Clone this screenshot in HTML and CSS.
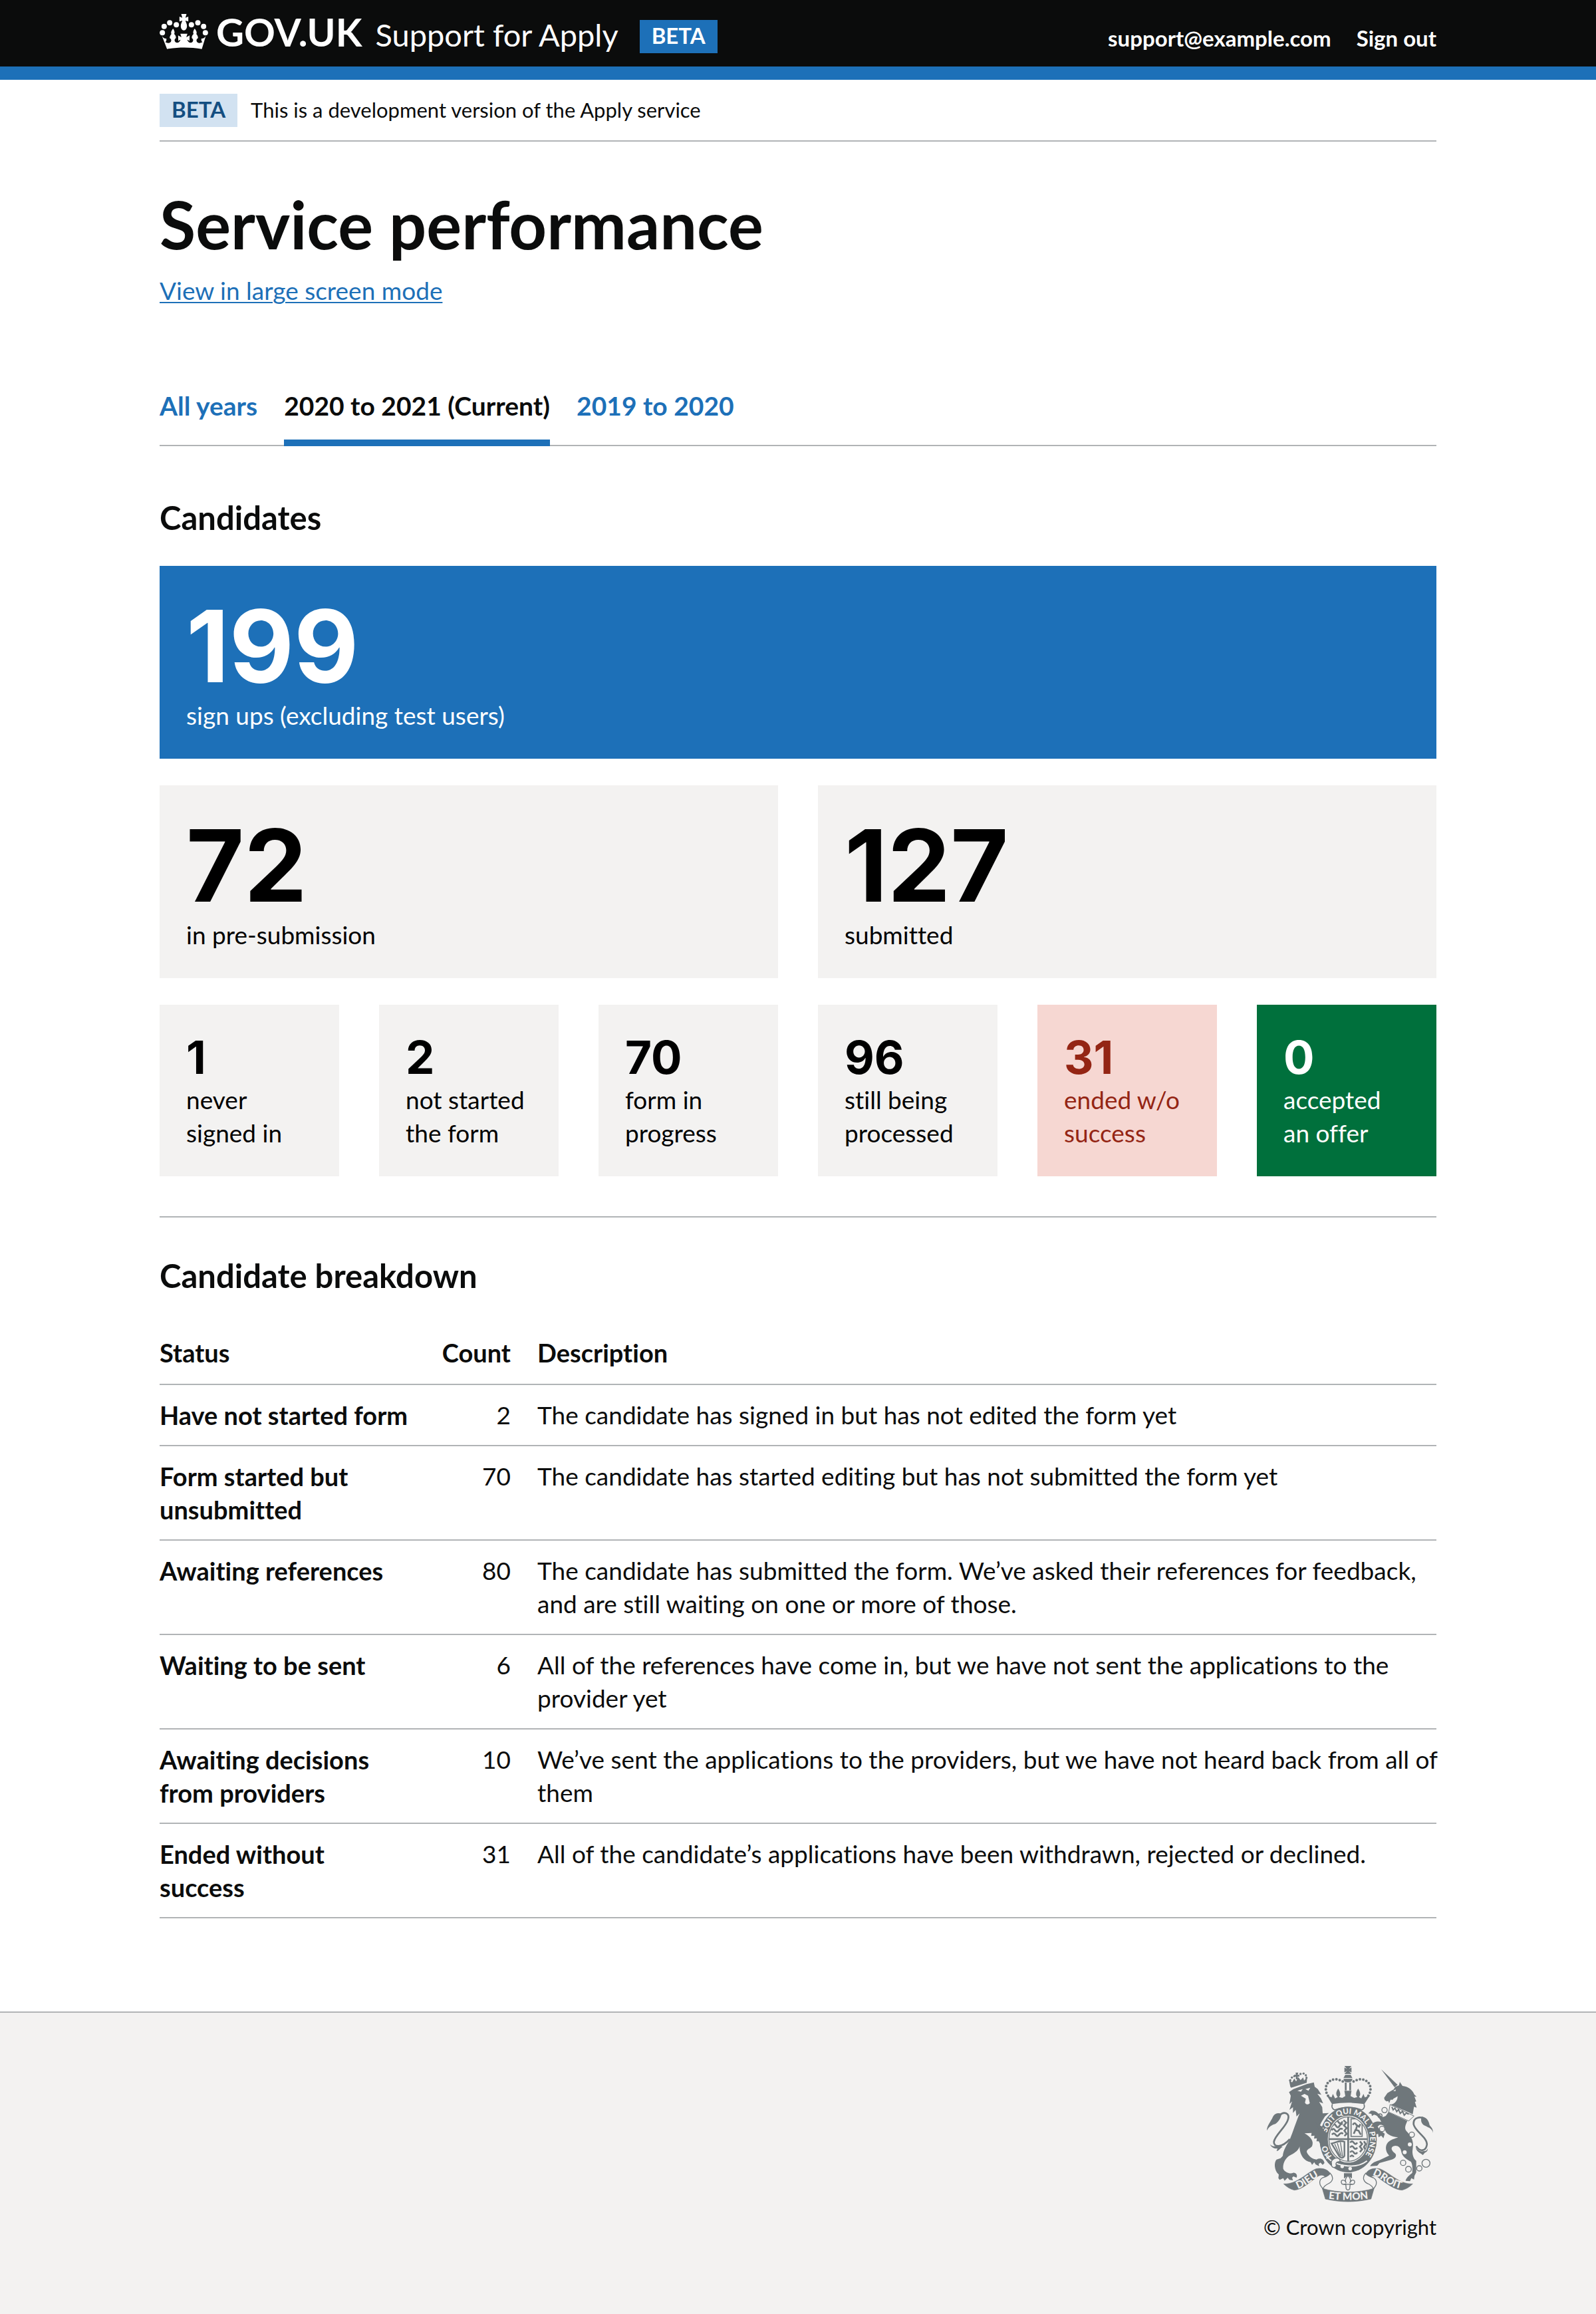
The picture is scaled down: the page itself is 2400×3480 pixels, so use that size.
FILE: index.html
```
<!DOCTYPE html>
<html lang="en">
<head>
  <meta charset="utf-8">
  <meta name="viewport" content="width=device-width, initial-scale=1">
  <title>Service performance - Support for Apply</title>
  <link rel="stylesheet" href="styles.css">
</head>
<body>
  <header class="header">
    <div class="container header-inner">
      <svg class="header-crown" viewBox="29 33 218 159" aria-hidden="true">
        <g fill="#fff">
          <circle cx="41" cy="118" r="12"/><circle cx="49" cy="89" r="12"/><circle cx="74" cy="73" r="12"/><circle cx="104" cy="82" r="12"/>
          <circle cx="235" cy="118" r="12"/><circle cx="227" cy="89" r="12"/><circle cx="201" cy="73" r="12"/><circle cx="172" cy="82" r="12"/>
          <path d="M126 33h24l-5 17 13-5v22l-13-4c2 8 7 14 7 24 0 12-6 20-14 20s-14-8-14-20c0-10 5-16 7-24l-13 4V45l13 5z"/>
          <path d="M39 132c5 9 12 13 20 12 1 7 0 12-5 16 9 6 19 6 25-1 4-7 2-13-5-17 0-8 3-13 8-19-5-7 2-17 7-24 5 7 10 17 5 24 6 6 9 11 8 19-6 4-8 10-3 17 6 6 15 5 20-2l4-8c-4 0-8 3-10 7l-1-26 15 8-5-16h32l-5 16 15-8-1 26c-2-4-6-7-10-7l4 8c5 7 14 8 20 2 5-7 3-13-3-17-1-8 2-13 8-19-5-7 0-17 5-24 5 7 12 17 7 24 5 6 8 11 8 19-7 4-9 10-5 17 6 7 16 7 25 1-5-4-6-9-5-16 8 1 15-3 20-12l-18 59c-52-9-105-9-157 0z"/>
        </g>
      </svg>
      <a class="logotype" href="#">GOV.UK</a>
      <a class="service-name" href="#">Support for Apply</a>
      <strong class="tag tag-header">BETA</strong>
      <nav class="header-nav" aria-label="Account">
        <a href="#">support@example.com</a>
        <a href="#">Sign out</a>
      </nav>
    </div>
  </header>

  <div class="container phase-banner">
    <strong class="tag">BETA</strong>
    <span>This is a development version of the Apply service</span>
  </div>

  <main class="container main">
    <h1>Service performance</h1>
    <p class="mode"><a href="#">View in large screen mode</a></p>

    <nav class="tabs" aria-label="Recruitment cycle">
      <a href="#">All years</a>
      <a href="#" class="current" aria-current="page">2020 to 2021 (Current)</a>
      <a href="#">2019 to 2020</a>
    </nav>

    <section>
      <h2>Candidates</h2>
      <div class="tiles">
        <div class="tile tile-full tile-blue"><span class="figure">199</span><span>sign ups (excluding test users)</span></div>
        <div class="tile tile-half"><span class="figure">72</span><span>in pre-submission</span></div>
        <div class="tile tile-half"><span class="figure">127</span><span>submitted</span></div>
        <div class="tile"><span class="figure figure-small">1</span><span>never signed in</span></div>
        <div class="tile"><span class="figure figure-small">2</span><span>not started the form</span></div>
        <div class="tile"><span class="figure figure-small">70</span><span>form in progress</span></div>
        <div class="tile"><span class="figure figure-small">96</span><span>still being processed</span></div>
        <div class="tile tile-red"><span class="figure figure-small">31</span><span>ended w/o success</span></div>
        <div class="tile tile-green"><span class="figure figure-small">0</span><span>accepted an offer</span></div>
      </div>
    </section>

    <section class="breakdown">
      <h2>Candidate breakdown</h2>
      <table>
        <thead>
          <tr><th scope="col" class="col-status">Status</th><th scope="col" class="col-count">Count</th><th scope="col">Description</th></tr>
        </thead>
        <tbody>
          <tr><th scope="row">Have not started form</th><td class="count">2</td><td>The candidate has signed in but has not edited the form yet</td></tr>
          <tr><th scope="row">Form started but unsubmitted</th><td class="count">70</td><td>The candidate has started editing but has not submitted the form yet</td></tr>
          <tr><th scope="row">Awaiting references</th><td class="count">80</td><td>The candidate has submitted the form. We’ve asked their references for feedback, and are still waiting on one or more of those.</td></tr>
          <tr><th scope="row">Waiting to be sent</th><td class="count">6</td><td>All of the references have come in, but we have not sent the applications to the provider yet</td></tr>
          <tr><th scope="row">Awaiting decisions from providers</th><td class="count">10</td><td class="preset">We’ve sent the applications to the providers, but we have not heard back from all of<br>them</td></tr>
          <tr><th scope="row">Ended without success</th><td class="count">31</td><td>All of the candidate’s applications have been withdrawn, rejected or declined.</td></tr>
        </tbody>
      </table>
    </section>
  </main>

  <footer class="footer">
    <div class="container footer-inner">
      <a class="copyright" href="#">
        <svg class="crest" viewBox="132 78 750 612" aria-hidden="true">
          <defs>
            <path id="garter" d="M440 500A99 114 0 1 1 558 500"/>
            <path id="motto-left" d="M272 632C310 622 340 585 378 574"/>
            <path id="motto-mid" d="M410 677Q498 688 588 677"/>
            <path id="motto-right" d="M608 570C650 583 680 622 738 632"/>
            <clipPath id="shield"><ellipse cx="499" cy="408" rx="86" ry="99"/></clipPath>
          </defs>
          <g fill="#6f777b">
            <!-- lion -->
            <path d="M232 196L252 182L312 160L344 152L348 172L362 182L378 208L360 203L376 224L386 247L368 240L382 264L384 292L412 290L394 306L378 332L372 346L396 360L402 388L408 420L396 436L380 424L374 432L366 418L356 418L358 404L345 406L347 392L332 394L334 380L302 382C330 398 346 418 336 440C326 452 312 452 312 466C320 486 340 500 356 500C372 490 390 498 392 516L384 524L374 514L366 520L368 530L352 522L346 512L336 524L330 512C300 508 282 480 280 448L282 414C288 456 258 470 232 484C212 500 204 520 206 542C214 560 240 566 250 560C264 558 272 572 266 582L252 576L246 582L250 594L234 592L226 582L212 596L206 584L190 592L184 584L186 568C164 548 164 512 176 500L194 494L204 484C206 460 220 436 234 414C252 370 262 336 280 292L266 306L262 276L250 290L250 264L234 276L246 238L234 250L240 212Z"/>
            <path d="M238 172L232 140L246 152L256 134L264 148L274 128L284 142L296 130L300 144L314 128L312 154L242 176Z"/>
            <path d="M262 108h12l-3 10h8v8h-8l2 12h-10v-12h-8v-8h8z"/>
            <g><circle cx="238" cy="142" r="5"/><circle cx="245" cy="130" r="5"/><circle cx="256" cy="124" r="5"/><circle cx="284" cy="114" r="5"/><circle cx="298" cy="112" r="5"/><circle cx="308" cy="120" r="5"/><circle cx="311" cy="131" r="5"/></g>
            <path d="M132 370C132 346 150 330 160 306C168 290 186 288 198 294C196 314 184 330 170 340C154 344 142 352 132 370Z"/>
            <path d="M146 432C160 444 174 442 182 434L204 444C190 448 192 458 176 462L180 450C164 452 154 446 146 432Z"/>
            <path d="M190 300C210 280 236 292 228 318C220 352 168 390 164 420C162 446 200 448 236 408" fill="none" stroke="#6f777b" stroke-width="8"/>
            <!-- unicorn -->
            <path d="M648 93L722 163L708 174Z"/>
            <path d="M661 222L676 200L704 184L712 172L728 166L732 150L744 168C768 170 790 186 797 206L808 217L798 216L806 238L800 240L808 266L796 262L790 296L774 288L690 252L700 250C712 244 722 232 722 214C714 222 704 222 700 230L690 230L684 246L680 236L672 238L664 232Z"/>
            <path d="M680 286L766 326C756 346 752 360 762 372C786 396 796 420 790 452C786 476 794 496 806 506L806 558L798 574L796 590L784 584L778 598L758 596C762 580 774 572 788 560C790 534 788 520 782 510C764 500 742 488 738 462C736 448 726 438 712 438C690 440 690 456 708 470C722 480 712 496 696 500L640 516L630 528L598 530C606 514 624 508 638 504L684 482C664 462 664 430 686 416C700 408 716 404 724 400C690 396 668 384 664 362C664 350 656 342 640 344L632 352C640 366 654 376 664 384L658 404L648 392L636 400L634 384L622 388C622 372 616 356 606 342C616 326 636 328 648 330C640 312 628 300 616 298L606 304L604 294L590 292L602 280C626 276 636 296 654 308C668 308 672 300 680 286Z"/>
            <path d="M882 380C878 358 860 356 852 350C832 344 824 330 830 306C848 308 862 320 866 344C872 354 882 358 882 380Z"/>
            <path d="M804 446C818 462 830 466 840 462C850 464 858 456 858 448C860 462 850 468 844 470L836 480C830 472 808 468 804 446Z"/>
            <path d="M846 318C826 304 792 308 794 340C798 372 858 400 854 434C850 462 822 468 806 440" fill="none" stroke="#6f777b" stroke-width="8"/>
            <!-- royal crown -->
            <path d="M482 78h32l-11 13 11-6v22l-11-6 11 13h-32l11-13-11 6V85l11 6z"/>
            <path d="M486 118h24l8 14H478z"/><path d="M478 136h40c0 12-10 16-20 16s-20-4-20-16z"/>
            <path d="M484 152h8v36h-8zM504 152h8v36h-8z"/>
            <path d="M426 250L402 210L424 220L430 204L440 224L452 218C440 206 446 192 454 180C462 192 468 206 458 218L472 222L486 214L482 190H514L510 214L526 222L540 218C530 206 536 192 544 180C552 192 558 206 548 218L558 224L568 204L574 220L598 210L572 250C524 242 474 242 426 250Z"/>
            <path d="M428 250C422 264 430 274 438 276C476 262 522 262 560 276C568 274 576 264 570 250" fill="none" stroke="#6f777b" stroke-width="5"/>
          </g>
          <g fill="none" stroke="#6f777b" stroke-linecap="round" stroke-width="12" stroke-dasharray="0 15">
            <path d="M408 212C386 180 402 138 444 138C460 140 474 146 484 154"/>
            <path d="M590 212C612 180 596 138 554 138C538 140 524 146 514 154"/>
          </g>
          <!-- garter and shield -->
          <ellipse cx="499" cy="410" rx="129" ry="148" fill="#6f777b"/>
          <ellipse cx="499" cy="408" rx="92" ry="106" fill="#f3f2f1"/>
          <ellipse cx="499" cy="408" rx="87" ry="100" fill="#f3f2f1" stroke="#6f777b" stroke-width="4"/>
          <g clip-path="url(#shield)" fill="none" stroke="#6f777b">
            <path d="M410 408H590M499 300V515" stroke-width="8"/>
            <path d="M428 348q8-14 16 0t16 0 14-6M424 368q8-12 16 0t16 0 18-4M426 388q8-12 16 0t16 0 18-4M440 332q8-12 16 0t18-4M478 322l12 12-10 12 12 12-10 12 10 14-10 10" stroke-width="8"/>
            <path d="M512 316h50v80h-50z" stroke-width="5"/>
            <path d="M520 344q8-16 16 0l12 8 6-12M524 384l8-18 14 4 10 18M538 350l-4 18" stroke-width="8"/>
            <path d="M508 424q8-12 16 0t16 0M508 446q8-12 16 0t16 0M508 468q8-12 16 0t16 0M508 488q8-12 16 0M552 418l10 12-10 12 10 12-10 12M570 418l8 12-8 14 6 10" stroke-width="8"/>
            <path d="M424 428C446 424 462 410 482 420L482 484C476 496 464 494 458 484Z" stroke-width="7"/>
            <path d="M438 430l24 52M450 426l18 60M464 422l10 66" stroke-width="4"/>
          </g>
          <path d="M398 480C430 530 530 548 584 506" fill="none" stroke="#f3f2f1" stroke-width="6"/>
          <circle cx="472" cy="531" r="8" fill="#f3f2f1"/><circle cx="508" cy="541" r="8" fill="#f3f2f1"/>
          <path d="M436 496C452 488 468 500 460 510C448 508 440 516 446 528C438 542 422 536 424 520C420 508 428 500 436 496Z" fill="#f3f2f1" stroke="#6f777b" stroke-width="4"/>
          <g class="crest-text garter-text">
            <text><textPath href="#garter" startOffset="20">HO</textPath></text>
            <text><textPath href="#garter" startOffset="132">SOIT QUI MAL Y PENSE</textPath></text>
          </g>
          <path d="M352 332L388 362L396 388L406 420L396 436L380 424L366 410L372 380Z" fill="#6f777b"/>
          <!-- chain -->
          <g fill="none" stroke="#6f777b" stroke-width="4">
            <circle cx="663" cy="277" r="12"/><circle cx="643" cy="303" r="9"/><circle cx="747" cy="515" r="12"/><circle cx="771" cy="544" r="13"/><circle cx="820" cy="540" r="12"/><circle cx="850" cy="517" r="18"/>
            <circle cx="652" cy="362" r="12" fill="#f3f2f1"/><circle cx="786" cy="388" r="12" fill="#f3f2f1"/>
          </g>
          <g fill="#f3f2f1">
            <circle cx="777" cy="432" r="9"/><circle cx="754" cy="467" r="9"/>
            <path d="M688 252L796 304L772 326L682 286Z" stroke="#6f777b" stroke-width="3"/>
            <path d="M270 190l24-8-8 12zM306 182l22-6-8 14zM286 212l16-8 16 8 8 34q-14 12-22-2l4-18z"/>
            <path d="M702 190l12-6-2 8z"/>
          </g>
          <path d="M696 262l6 14 8-8 8 16 8-10 8 18 10-10 8 18 10-10 10 6" fill="none" stroke="#6f777b" stroke-width="6"/>
          <!-- motto ribbon -->
          <g fill="#6f777b" stroke="#6f777b" stroke-width="2">
            <path d="M208 610C270 612 310 560 354 542C384 536 410 546 420 566L400 584C390 566 370 566 352 584C320 606 290 636 256 638C238 634 222 624 208 610Z"/>
            <path d="M790 610C728 612 688 560 642 542C612 536 586 546 578 566L598 584C610 566 628 572 646 590C678 612 708 636 742 638C760 634 776 624 790 610Z"/>
            <path d="M382 630C450 652 548 652 616 630L602 678C530 694 466 694 396 678Z"/>
          </g>
          <g fill="#f3f2f1" stroke="#6f777b" stroke-width="4">
            <path d="M418 562C436 582 430 602 404 612C394 618 388 624 386 632C366 614 366 592 384 582C396 578 412 574 418 562Z"/>
            <path d="M578 562C560 582 568 602 594 612C604 618 610 624 612 632C632 614 630 592 612 582C600 578 586 574 578 562Z"/>
            <path d="M498 572C510 584 512 596 506 606C512 590 530 588 528 604C526 614 514 614 508 610L506 632Q498 644 490 632L488 610C482 614 470 614 468 604C466 588 484 590 490 606C484 596 486 584 498 572Z"/>
            <path d="M478 612H518"/>
          </g>
          <path d="M480 562h36v24l-18-14-18 14z" fill="#6f777b"/>
          <g class="crest-text">
            <text><textPath href="#motto-left">DIEU</textPath></text>
            <text><textPath href="#motto-mid">ET MON</textPath></text>
            <text><textPath href="#motto-right">DROIT</textPath></text>
          </g>
        </svg>
        <span>© Crown copyright</span>
      </a>
    </div>
  </footer>
</body>
</html>
```

FILE: styles.css
```
:root {
  --black: #0b0c0c;
  --blue: #1d70b8;
  --border: #b1b4b6;
  --grey: #f3f2f1;
}

* {
  box-sizing: border-box;
}

body {
  display: flex;
  flex-direction: column;
  min-height: 100vh;
  margin: 0;
  background: #fff;
  color: var(--black);
  font-family: Lato, "Liberation Sans", sans-serif;
  font-size: 37px;
  font-variant-ligatures: none;
  line-height: 50px;
}

.container {
  width: 80%;
  max-width: 1920px;
  margin: 0 auto;
}

h1,
h2,
p {
  margin: 0;
}

/* Header */

.header {
  background: var(--black);
  border-bottom: 20px solid var(--blue);
}

.header-inner {
  display: flex;
  align-items: baseline;
  padding: 18px 0 13px;
  line-height: 60px;
}

.header a {
  color: #fff;
  text-decoration: none;
}

.header-crown {
  align-self: flex-start;
  width: 73px;
  height: 53px;
  margin: 3px 12px 0 0;
}

.logotype {
  margin-right: 20px;
  font-size: 58px;
  font-weight: 700;
}

.service-name {
  margin-right: 32px;
  font-size: 47px;
}

.tag {
  padding: 0 18px 4px;
  background: #d2e2f1;
  color: #144e81;
  font-size: 33px;
  line-height: 46px;
}

.tag-header {
  align-self: flex-start;
  margin-top: 12px;
  background: var(--blue);
  color: #fff;
}

.header-nav {
  display: flex;
  gap: 38px;
  margin-left: auto;
  font-size: 33px;
  font-weight: 700;
}

/* Phase banner */

.phase-banner {
  display: flex;
  align-items: baseline;
  gap: 20px;
  padding: 20px 0;
  border-bottom: 2px solid var(--border);
  font-size: 31px;
}

/* Main */

.main {
  padding: 74px 0 140px;
}

h1 {
  margin-bottom: 25px;
  font-size: 99px;
  line-height: 100px;
}

h2 {
  margin-bottom: 43px;
  font-size: 49px;
  line-height: 60px;
}

.mode a {
  color: var(--blue);
  text-decoration-thickness: 2px;
  text-underline-offset: 3px;
}

.tabs {
  display: flex;
  gap: 40px;
  margin: 123px 0 77px;
  border-bottom: 2px solid var(--border);
  font-size: 39px;
  font-weight: 700;
}

.tabs a {
  margin-bottom: -2px;
  padding-bottom: 26px;
  border-bottom: 10px solid transparent;
  color: var(--blue);
  text-decoration: none;
}

.tabs .current {
  border-color: var(--blue);
  color: var(--black);
}

/* Tiles */

.tiles {
  display: grid;
  grid-template-columns: repeat(6, 1fr);
  gap: 40px 60px;
}

.tile {
  display: flex;
  flex-direction: column;
  padding: 42px 40px 40px;
  background: var(--grey);
  color: #000;
}

.tile-full {
  grid-column: span 6;
}

.tile-half {
  grid-column: span 3;
}

.tile-blue {
  background: var(--blue);
  color: #fff;
}

.tile-red {
  background: #f6d7d2;
  color: #942514;
}

.tile-green {
  background: #00703c;
  color: #fff;
}

.figure {
  font-family: Inter, "Liberation Sans", sans-serif;
  font-size: 150px;
  font-weight: 700;
  line-height: 158px;
}

.figure-small {
  margin-bottom: 2px;
  font-size: 69px;
  line-height: 74px;
}

/* Breakdown table */

.breakdown {
  margin-top: 60px;
  padding-top: 57px;
  border-top: 2px solid var(--border);
}

table {
  width: 100%;
  border-collapse: separate;
  border-spacing: 0;
  table-layout: fixed;
}

th,
td {
  padding: 20px 0;
  border-bottom: 2px solid var(--border);
  text-align: left;
  vertical-align: top;
}

th {
  font-size: 38px;
}

thead th {
  padding: 18px 0 22px;
}

.col-status {
  width: 405px;
}

.col-count {
  width: 163px;
}

tbody th {
  padding-right: 25px;
}

th.col-count,
.count {
  padding-right: 40px;
  text-align: right;
}

.preset {
  white-space: nowrap;
}

/* Footer */

.footer {
  flex: 1;
  padding: 80px 0 107px;
  background: var(--grey);
  border-top: 2px solid var(--border);
}

.footer-inner {
  display: flex;
  justify-content: flex-end;
}

.copyright {
  display: flex;
  flex-direction: column;
  align-items: center;
  gap: 13px;
  color: var(--black);
  font-size: 31px;
  text-decoration: none;
}

.crest {
  width: 250px;
  height: 204px;
  overflow: visible;
}

.crest-text {
  fill: var(--grey);
  font-size: 46px;
  font-weight: 900;
}

.garter-text {
  font-size: 35px;
}
```
